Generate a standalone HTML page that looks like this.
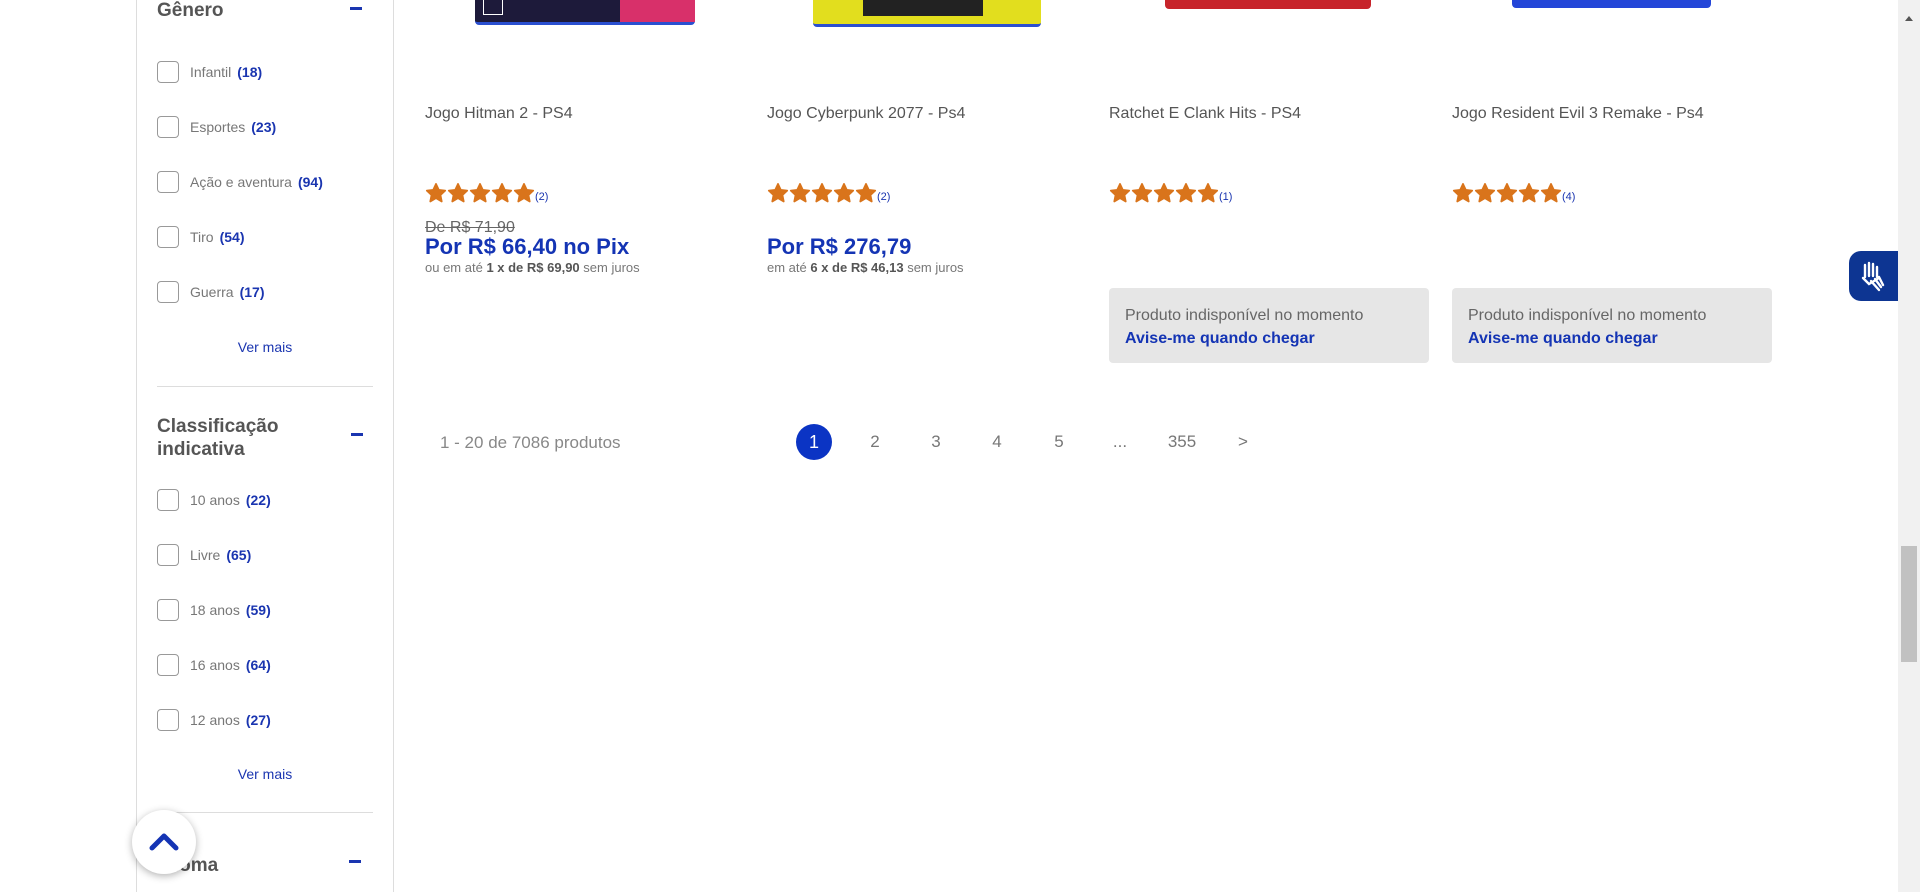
<!DOCTYPE html>
<html><head><meta charset="utf-8"><style>
*{margin:0;padding:0;box-sizing:border-box}
body{width:1920px;height:892px;overflow:hidden;background:#fff;font-family:"Liberation Sans",sans-serif;position:relative;color:#666}
.a{position:absolute;white-space:nowrap}
.side{position:absolute;left:136px;top:0;width:258px;height:892px;border-left:1px solid #ddd;border-right:1px solid #ddd}
.h{font-weight:bold;font-size:19px;color:#555;line-height:23px}
.minus{position:absolute;width:12px;height:3px;background:#1a35b0}
.cb{position:absolute;left:157px;width:22px;height:22px;border:1.5px solid #999;border-radius:4px}
.lbl{position:absolute;left:190px;font-size:14px;color:#777;line-height:16px}
.lbl b{color:#1a35b0;margin-left:6px;font-size:14px}
.vm{position:absolute;left:157px;width:216px;text-align:center;font-size:14px;color:#1a35b0}
.div{position:absolute;left:157px;width:216px;height:1px;background:#ddd}
.t{font-size:16px;color:#555}
.stars{position:absolute;font-size:0}
.stars svg{width:22px;height:22px;margin-right:0}
.stars span{font-size:11px;color:#1a35b0;vertical-align:4px}
.blue{color:#1434b4}
.box{position:absolute;width:320px;height:75px;background:#e6e6e6;border-radius:4px;top:288px;padding:16px 16px;font-size:16px;line-height:23px;color:#666}
.box b{color:#1434b4;font-weight:bold}
.pg{position:absolute;top:430px;font-size:17px;color:#777;width:36px;text-align:center;line-height:24px}
</style></head><body>
<svg width="0" height="0" style="position:absolute"><defs><symbol id="st" viewBox="0 0 24 24"><path d="M12 2.2l3 6.4 7 .8-5.2 4.8 1.4 7L12 17.6l-6.2 3.6 1.4-7L2 9.4l7-.8z" fill="#d9741b" stroke="#d9741b" stroke-width="2" stroke-linejoin="round"/></symbol></defs></svg>
<div class="side"></div>
<div class="a h" style="left:157px;top:-1px">Gênero</div>
<div class="minus" style="left:350px;top:7px"></div>
<div class="cb" style="top:61px"></div><div class="lbl" style="top:64px">Infantil<b>(18)</b></div>
<div class="cb" style="top:116px"></div><div class="lbl" style="top:119px">Esportes<b>(23)</b></div>
<div class="cb" style="top:171px"></div><div class="lbl" style="top:174px">Ação e aventura<b>(94)</b></div>
<div class="cb" style="top:226px"></div><div class="lbl" style="top:229px">Tiro<b>(54)</b></div>
<div class="cb" style="top:281px"></div><div class="lbl" style="top:284px">Guerra<b>(17)</b></div>
<div class="vm" style="top:339px">Ver mais</div>
<div class="div" style="top:386px"></div>
<div class="a h" style="left:157px;top:415px">Classificação<br>indicativa</div>
<div class="minus" style="left:351px;top:433px"></div>
<div class="cb" style="top:489px"></div><div class="lbl" style="top:492px">10 anos<b>(22)</b></div>
<div class="cb" style="top:544px"></div><div class="lbl" style="top:547px">Livre<b>(65)</b></div>
<div class="cb" style="top:599px"></div><div class="lbl" style="top:602px">18 anos<b>(59)</b></div>
<div class="cb" style="top:654px"></div><div class="lbl" style="top:657px">16 anos<b>(64)</b></div>
<div class="cb" style="top:709px"></div><div class="lbl" style="top:712px">12 anos<b>(27)</b></div>
<div class="vm" style="top:766px">Ver mais</div>
<div class="div" style="top:812px"></div>
<div class="a h" style="left:157px;top:854px">Idioma</div>
<div class="minus" style="left:349px;top:860px"></div>
<div class="a" style="left:132px;top:810px;width:64px;height:64px;border-radius:50%;background:#fff;box-shadow:0 2px 8px rgba(0,0,0,.3)"><svg width="64" height="64" viewBox="0 0 64 64"><path d="M20 38l12-12 12 12" fill="none" stroke="#1434b4" stroke-width="5" stroke-linecap="round" stroke-linejoin="round"/></svg></div>

<div class="a" style="left:475px;top:0;width:220px;height:25px;background:#1d1a3a;border-bottom:3px solid #2a4fd0;border-radius:0 0 4px 4px"><div style="position:absolute;right:0;top:0;width:75px;height:22px;background:#d8306a"></div><div style="position:absolute;left:8px;top:0;width:20px;height:15px;border:1.5px solid #fff;border-top:none"></div></div>
<div class="a" style="left:813px;top:0;width:228px;height:27px;background:#e2de1e;border-bottom:3px solid #2a4fd0;border-radius:0 0 4px 4px"><div style="position:absolute;left:50px;top:0;width:120px;height:16px;background:#222"></div></div>
<div class="a" style="left:1165px;top:0;width:206px;height:9px;background:#c7242b;border-radius:0 0 4px 4px"></div>
<div class="a" style="left:1512px;top:0;width:199px;height:8px;background:#2446d8;border-radius:0 0 4px 4px"></div>

<div class="a t" style="left:425px;top:105px">Jogo Hitman 2 - PS4</div>
<div class="a t" style="left:767px;top:105px">Jogo Cyberpunk 2077 - Ps4</div>
<div class="a t" style="left:1109px;top:105px">Ratchet E Clank Hits - PS4</div>
<div class="a t" style="left:1452px;top:105px">Jogo Resident Evil 3 Remake - Ps4</div>

<div class="stars" style="left:425px;top:182px"><svg><use href="#st"/></svg><svg><use href="#st"/></svg><svg><use href="#st"/></svg><svg><use href="#st"/></svg><svg><use href="#st"/></svg><span>(2)</span></div>
<div class="stars" style="left:767px;top:182px"><svg><use href="#st"/></svg><svg><use href="#st"/></svg><svg><use href="#st"/></svg><svg><use href="#st"/></svg><svg><use href="#st"/></svg><span>(2)</span></div>
<div class="stars" style="left:1109px;top:182px"><svg><use href="#st"/></svg><svg><use href="#st"/></svg><svg><use href="#st"/></svg><svg><use href="#st"/></svg><svg><use href="#st"/></svg><span>(1)</span></div>
<div class="stars" style="left:1452px;top:182px"><svg><use href="#st"/></svg><svg><use href="#st"/></svg><svg><use href="#st"/></svg><svg><use href="#st"/></svg><svg><use href="#st"/></svg><span>(4)</span></div>

<div class="a" style="left:425px;top:219px;font-size:16px;color:#666;text-decoration:line-through">De R$ 71,90</div>
<div class="a blue" style="left:425px;top:234px;font-size:22px;font-weight:bold">Por R$ 66,40 no Pix</div>
<div class="a" style="left:425px;top:260px;font-size:13px;color:#777">ou em até <b style="color:#555">1 x de R$ 69,90</b> sem juros</div>
<div class="a blue" style="left:767px;top:234px;font-size:22px;font-weight:bold">Por R$ 276,79</div>
<div class="a" style="left:767px;top:260px;font-size:13px;color:#777">em até <b style="color:#555">6 x de R$ 46,13</b> sem juros</div>

<div class="box" style="left:1109px">Produto indisponível no momento<br><b>Avise-me quando chegar</b></div>
<div class="box" style="left:1452px">Produto indisponível no momento<br><b>Avise-me quando chegar</b></div>

<div class="a" style="left:440px;top:433px;font-size:17px;color:#888">1 - 20 de 7086 produtos</div>
<div class="a" style="left:796px;top:424px;width:36px;height:36px;border-radius:50%;background:#0b34c4;color:#fff;font-size:18px;text-align:center;line-height:36px">1</div>
<div class="pg" style="left:857px">2</div>
<div class="pg" style="left:918px">3</div>
<div class="pg" style="left:979px">4</div>
<div class="pg" style="left:1041px">5</div>
<div class="pg" style="left:1102px">...</div>
<div class="pg" style="left:1164px">355</div>
<div class="pg" style="left:1225px">&gt;</div>

<div class="a" style="left:1849px;top:251px;width:49px;height:50px;background:#0d3592;border-radius:12px 0 0 12px"><svg width="49" height="50" viewBox="0 0 49 50"><path d="M16 14v12M20 12v13M24 13v12M28 16v10M14 27l6 6 10-6M22 30l8 9M26 28l6 8M30 26l4 8" stroke="#fff" stroke-width="2.4" fill="none" stroke-linecap="round"/></svg></div>

<div class="a" style="left:1898px;top:0;width:22px;height:892px;background:#f1f1f1"></div>
<div class="a" style="left:1909px;top:12px;border:4px solid transparent;border-bottom:5px solid #555;transform:translateX(-4px)"></div>
<div class="a" style="left:1901px;top:546px;width:16px;height:116px;background:#c1c1c1"></div>
</body></html>
